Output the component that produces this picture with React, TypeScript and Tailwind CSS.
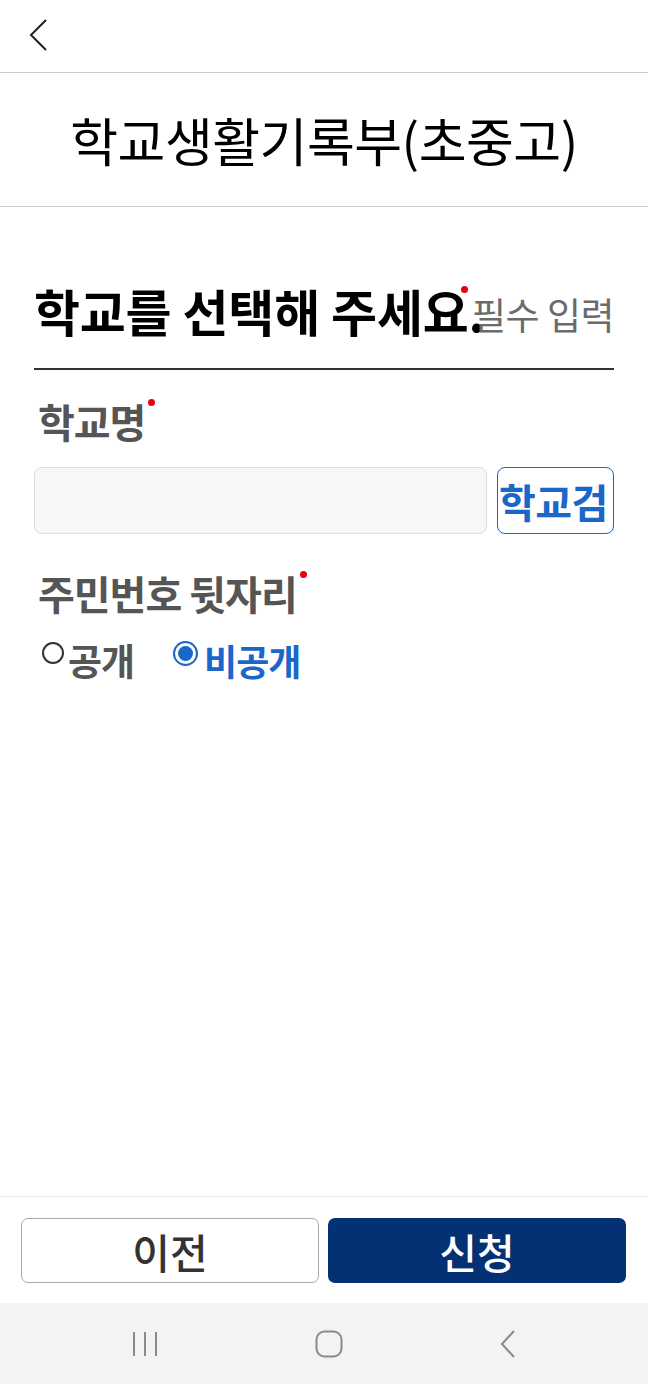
import React from "react";

const font = { fontFamily: '"Noto Sans CJK KR", "Noto Sans", sans-serif' };

const Dot = () => (
  <span className="inline-block w-[7px] h-[7px] rounded-full bg-[#e60012] shrink-0" />
);

const Label = ({ text }: { text: string }) => (
  <div className="flex items-start pl-[4px]">
    <span className="text-[40px] leading-[46px] font-bold text-[#555555] tracking-[-1px]">
      {text}
    </span>
    <span className="ml-[3px] mt-[1px] flex">
      <Dot />
    </span>
  </div>
);

const App = () => {
  return (
    <div className="w-[648px] h-[1384px] flex flex-col bg-white" style={font}>
      {/* top bar */}
      <div className="h-[73px] shrink-0 flex items-center px-[28px] border-b border-[#cccccc]">
        <svg width="22" height="34" viewBox="0 0 22 34" className="mt-[-2px]">
          <polyline points="18,2 3,17 18,32" fill="none" stroke="#222" strokeWidth="2" />
        </svg>
      </div>

      {/* title */}
      <div className="h-[134px] shrink-0 flex items-center justify-center border-b border-[#cccccc]">
        <h1 className="text-[52px] leading-[60px] text-black tracking-[-0.5px]">
          학교생활기록부(초중고)
        </h1>
      </div>

      {/* content */}
      <div className="flex-1 px-[34px] pt-[73px]">
        <div className="flex items-center pb-[28px] border-b-[2px] border-[#333333]">
          <h2 className="w-[424px] shrink-0 whitespace-nowrap text-[50px] leading-[60px] font-bold text-black tracking-[-0.2px]">
            학교를 선택해 주세요.
          </h2>
          <div className="ml-auto flex items-start mt-[8px]">
            <span className="mt-[-6px] mr-[4px] flex">
              <Dot />
            </span>
            <span className="text-[37px] leading-[44px] text-[#6b6b6b] tracking-[-0.5px]">필수 입력</span>
          </div>
        </div>

        <div className="mt-[28px]">
          <Label text="학교명" />
        </div>

        <div className="mt-[23px] flex gap-[10px]">
          <input
            className="flex-1 h-[67px] rounded-[8px] bg-[#f7f7f7] border border-[#dddddd] outline-none px-3"
            type="text"
          />
          <button className="w-[117px] h-[67px] rounded-[8px] border border-[#1a66c9] bg-white overflow-hidden flex items-center pl-[1px]">
            <span className="text-[40px] leading-[48px] font-bold text-[#1a66c9] whitespace-nowrap tracking-[-0.5px]">
              학교검
            </span>
          </button>
        </div>

        <div className="mt-[36px]">
          <Label text="주민번호 뒷자리" />
        </div>

        <div className="mt-[21px] flex items-center">
          <label className="flex items-center">
            <span className="w-[22px] h-[22px] rounded-full border-[2px] border-[#333333] mt-[-14px] ml-[8px]" />
            <span className="text-[37px] leading-[46px] font-bold text-[#555555] tracking-[-1px] ml-[4px]">공개</span>
          </label>
          <label className="flex items-center ml-[39px]">
            <span className="w-[25px] h-[25px] rounded-full border-[2px] border-[#1a66c9] mt-[-14px] flex items-center justify-center">
              <span className="w-[15px] h-[15px] rounded-full bg-[#1a66c9]" />
            </span>
            <span className="text-[36px] leading-[46px] font-bold text-[#1a66c9] tracking-[-1px] ml-[6px]">비공개</span>
          </label>
        </div>
      </div>

      {/* bottom actions */}
      <div className="shrink-0 border-t border-[#eeeeee] pt-[21px] pb-[20px] pl-[21px] flex gap-[9px]">
        <button className="w-[298px] h-[65px] rounded-[7px] border border-[#aaaaaa] bg-white text-[41px] leading-[50px] font-medium text-[#333333]">
          이전
        </button>
        <button className="w-[298px] h-[65px] rounded-[7px] bg-[#033174] text-[41px] leading-[50px] font-medium text-white">
          신청
        </button>
      </div>

      {/* system nav */}
      <div className="h-[81px] shrink-0 bg-[#f3f3f5] flex items-center justify-between pl-[131px] pr-[130px]">
        <svg width="28" height="28" viewBox="0 0 28 28">
          <line x1="3" y1="2" x2="3" y2="26" stroke="#8a8a8a" strokeWidth="2" />
          <line x1="14" y1="2" x2="14" y2="26" stroke="#8a8a8a" strokeWidth="2" />
          <line x1="25" y1="2" x2="25" y2="26" stroke="#8a8a8a" strokeWidth="2" />
        </svg>
        <svg width="28" height="28" viewBox="0 0 28 28">
          <rect x="1.5" y="1.5" width="25" height="25" rx="8" fill="none" stroke="#8a8a8a" strokeWidth="2" />
        </svg>
        <svg width="20" height="30" viewBox="0 0 20 30">
          <polyline points="16,2 4,15 16,28" fill="none" stroke="#8a8a8a" strokeWidth="2" />
        </svg>
      </div>
    </div>
  );
};

export default App;
